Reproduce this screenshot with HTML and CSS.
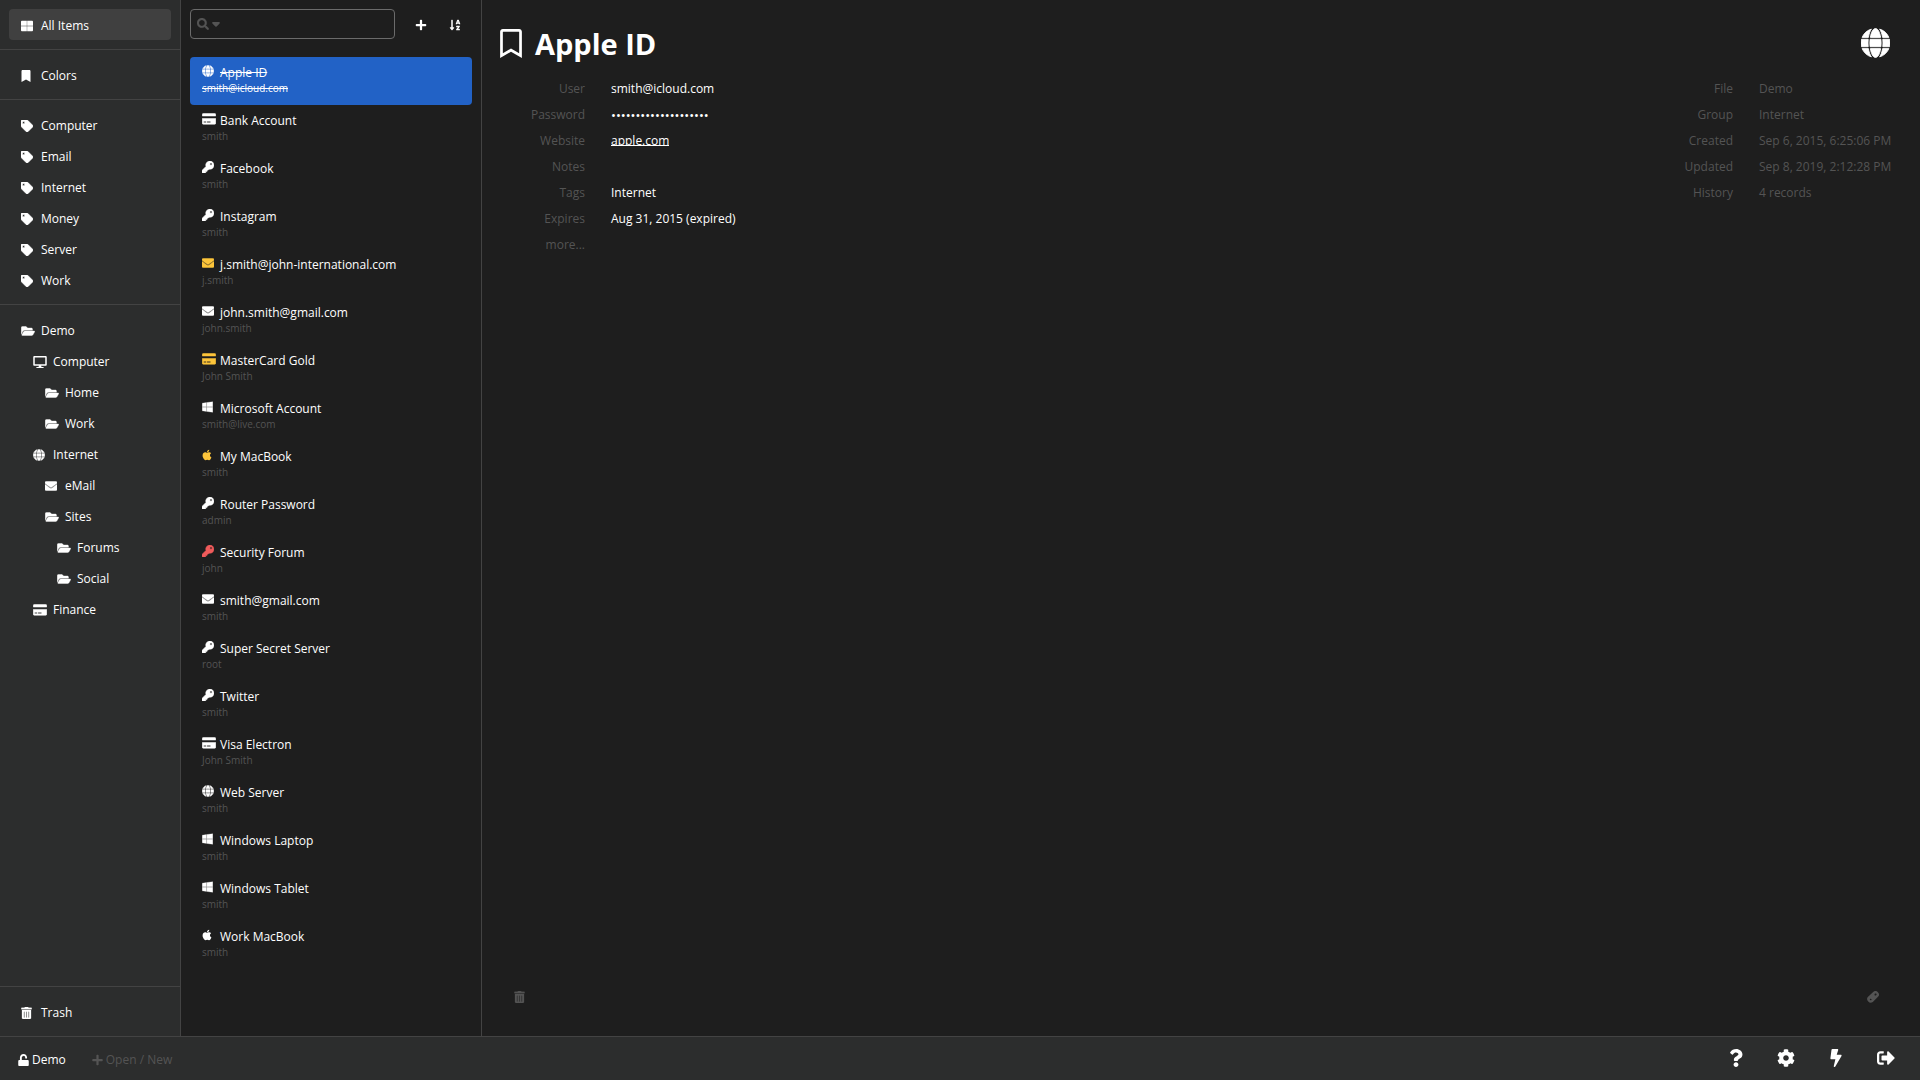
FILE: index.html
```html
<!DOCTYPE html>
<html lang="en">
<head>
<meta charset="utf-8">
<title>Passwords</title>
<link rel="stylesheet" href="styles.css">
</head>
<body>
<svg class="defs" aria-hidden="true">
  <symbol id="i-th" viewBox="0 0 14 14"><path d="M1 1h5.800v5.800H0V2a1 1 0 0 1 1-1zM7.200 1H13a1 1 0 0 1 1 1v4.800H7.200zM0 7.200h6.800V13H1a1 1 0 0 1-1-1zM7.200 7.200H14V12a1 1 0 0 1-1 1H7.200z"/></symbol>
  <symbol id="i-bookmark" viewBox="0 0 384 512"><path d="M0 512V48C0 21.500 21.500 0 48 0h288c26.500 0 48 21.500 48 48v464L192 400z"/></symbol>
  <symbol id="i-bookmark-o" viewBox="0 0 384 512"><path d="M336 0H48C21.500 0 0 21.500 0 48v464l192-112 192 112V48c0-26.500-21.500-48-48-48zm0 428.400l-144-84-144 84V54a6 6 0 0 1 6-6h276a6 6 0 0 1 6 6z"/></symbol>
  <symbol id="i-tag" viewBox="0 0 512 512"><path stroke="currentColor" stroke-width="28" d="M0 252.100V48C0 21.500 21.500 0 48 0h204.100a48 48 0 0 1 33.900 14.100l211.900 211.900c18.700 18.700 18.700 49.100 0 67.900L293.800 497.900c-18.700 18.700-49.100 18.700-67.900 0L14.100 286.100A48 48 0 0 1 0 252.100zM112 64c-26.500 0-48 21.500-48 48s21.500 48 48 48 48-21.500 48-48-21.500-48-48-48z"/></symbol>
  <symbol id="i-folder" viewBox="0 0 576 512"><path stroke="currentColor" stroke-width="16" d="M572.700 292.100L500.300 416.200A64 64 0 0 1 445 448H45c-18.500 0-30-20.100-20.700-36.100l72.400-124.100A64 64 0 0 1 152 256h400c18.500 0 30 20.100 20.700 36.100zM152 224h328v-48c0-26.500-21.500-48-48-48H272l-64-64H48C21.500 64 0 85.500 0 112v278l69.100-118.400C86.200 242.200 118 224 152 224z"/></symbol>
  <symbol id="i-desktop" viewBox="0 0 576 512"><path d="M528 0H48C21.500 0 0 21.500 0 48v320c0 26.500 21.500 48 48 48h192l-16 48h-72c-13.300 0-24 10.700-24 24s10.700 24 24 24h272c13.300 0 24-10.700 24-24s-10.700-24-24-24h-72l-16-48h192c26.500 0 48-21.500 48-48V48c0-26.500-21.500-48-48-48zm-16 352H64V64h448z"/></symbol>
  <symbol id="i-globe" viewBox="0 0 496 512"><path stroke="currentColor" stroke-width="15" d="M336.500 160C322 70.700 287.800 8 248 8s-74 62.700-88.500 152zM152 256c0 22.200 1.200 43.500 3.300 64h185.300c2.100-20.500 3.300-41.800 3.300-64s-1.200-43.500-3.300-64H155.300c-2.100 20.500-3.300 41.800-3.300 64zm324.700-96c-28.600-67.900-86.500-120.400-158-141.600 24.400 33.800 41.200 84.700 50 141.600zM177.200 18.400C105.800 39.600 47.800 92.100 19.300 160h108c8.700-56.900 25.500-107.800 49.900-141.600zM487.400 192H372.700c2.100 21 3.300 42.500 3.300 64s-1.200 43-3.300 64h114.600c5.500-20.500 8.600-41.800 8.600-64s-3.100-43.500-8.500-64zM120 256c0-21.500 1.200-43 3.300-64H8.600C3.200 212.500 0 233.800 0 256s3.200 43.500 8.600 64h114.600c-2-21-3.200-42.500-3.200-64zm39.500 96c14.500 89.300 48.700 152 88.500 152s74-62.700 88.500-152zm159.300 141.600c71.400-21.200 129.400-73.700 158-141.600h-108c-8.800 56.900-25.600 107.800-50 141.600zM19.300 352c28.600 67.900 86.500 120.400 158 141.600-24.400-33.800-41.200-84.700-50-141.600z"/></symbol>
  <symbol id="i-mail" viewBox="0 0 512 512"><path stroke="currentColor" stroke-width="20" d="M502.300 190.800c3.900-3.100 9.700-.2 9.700 4.700V400c0 26.500-21.500 48-48 48H48c-26.500 0-48-21.500-48-48V195.600c0-5 5.700-7.800 9.700-4.700 22.400 17.400 52.100 39.500 154.100 113.600 21.100 15.400 56.700 47.800 92.200 47.600 35.700.3 72-32.800 92.300-47.600 102-74.100 131.600-96.300 154-113.700zM256 320c23.200.4 56.600-29.200 73.400-41.400 132.700-96.300 142.800-104.700 173.400-128.700 5.800-4.500 9.200-11.500 9.200-18.900v-19c0-26.500-21.500-48-48-48H48C21.500 64 0 85.500 0 112v19c0 7.400 3.400 14.300 9.200 18.900 30.600 23.900 40.700 32.400 173.400 128.700 16.800 12.200 50.200 41.800 73.400 41.400z"/></symbol>
  <symbol id="i-card" viewBox="0 0 576 512"><path stroke="currentColor" stroke-width="22" d="M0 432c0 26.500 21.500 48 48 48h480c26.500 0 48-21.500 48-48V236H0zm192-68c0-6.600 5.400-12 12-12h136c6.600 0 12 5.400 12 12v40c0 6.600-5.400 12-12 12H204c-6.600 0-12-5.400-12-12zm-128 0c0-6.600 5.400-12 12-12h72c6.600 0 12 5.400 12 12v40c0 6.600-5.400 12-12 12H76c-6.600 0-12-5.400-12-12zM576 60v68H0V60c0-26.500 21.500-38 48-38h480c26.500 0 48 11.500 48 38z"/></symbol>
  <symbol id="i-key" viewBox="0 0 512 512"><path stroke="currentColor" stroke-width="22" d="M512 176c0 97.200-78.800 176-176 176-11.200 0-22.200-1.100-32.800-3.100l-24 27a24 24 0 0 1-17.900 8.100H224v40c0 13.300-10.700 24-24 24h-40v40c0 13.300-10.700 24-24 24H24c-13.300 0-24-10.700-24-24v-78.100c0-6.400 2.500-12.500 7-17l161.800-161.800A176 176 0 1 1 512 176zM336 128c0 26.500 21.500 48 48 48s48-21.500 48-48-21.500-48-48-48-48 21.500-48 48z"/></symbol>
  <symbol id="i-windows" viewBox="0 0 448 512"><path stroke="currentColor" stroke-width="12" d="M0 93.700l183.600-25.300v177.400H0zm0 324.600l183.600 25.300V268.400H0zm203.800 28L448 480V268.400H203.800zm0-380.600v180.100H448V32z"/></symbol>
  <symbol id="i-apple" viewBox="0 0 384 512"><path d="M318.700 268.700c-.2-36.700 16.400-64.400 50-84.800-18.800-26.900-47.200-41.700-84.700-44.600-35.500-2.800-74.300 20.700-88.500 20.700-15 0-49.400-19.700-76.400-19.700C63.300 141.200 4 184.800 4 273.500q0 39.300 14.400 81.200c12.800 36.700 59 126.700 107.200 125.200 25.200-.6 43-17.900 75.800-17.900 31.800 0 48.300 17.900 76.400 17.900 48.600-.7 90.400-82.500 102.600-119.300-65.200-30.700-61.700-90-61.700-91.900zM262.100 104.500c27.300-32.400 24.800-61.900 24-72.500-24.100 1.400-52 16.400-67.900 34.900-17.500 19.800-27.800 44.300-25.600 71.900 26.100 2 49.900-11.400 69.500-34.300z"/></symbol>
  <symbol id="i-search" viewBox="0 0 512 512"><path stroke="currentColor" stroke-width="12" d="M505 442.700L405.300 343c-4.500-4.500-10.600-7-17-7H372c27.600-35.300 44-79.700 44-128C416 93.100 322.900 0 208 0S0 93.100 0 208s93.100 208 208 208c48.300 0 92.700-16.400 128-44v16.300c0 6.400 2.500 12.500 7 17l99.700 99.700c9.400 9.400 24.600 9.400 33.900 0l28.300-28.300c9.400-9.400 9.400-24.600.1-34zM208 336c-70.700 0-128-57.200-128-128 0-70.700 57.200-128 128-128 70.700 0 128 57.200 128 128 0 70.700-57.200 128-128 128z"/></symbol>
  <symbol id="i-caret" viewBox="0 0 8 12"><path d="M1 4h6c.8 0 1.200.9.600 1.400l-3 3a.9.900 0 0 1-1.200 0l-3-3C-.2 4.900.2 4 1 4z"/></symbol>
  <symbol id="i-plus" viewBox="0 0 448 512"><path d="M416 208H272V64c0-17.700-14.300-32-32-32h-32c-17.700 0-32 14.300-32 32v144H32c-17.700 0-32 14.300-32 32v32c0 17.700 14.300 32 32 32h144v144c0 17.700 14.300 32 32 32h32c17.700 0 32-14.300 32-32V304h144c17.700 0 32-14.300 32-32v-32c0-17.700-14.300-32-32-32z"/></symbol>
  <symbol id="i-sort" viewBox="0 0 448 512"><path d="M176 352h-48V48a16 16 0 0 0-16-16H80a16 16 0 0 0-16 16v304H16c-14.200 0-21.400 17.200-11.300 27.300l80 96a16 16 0 0 0 22.600 0l80-96C197.400 369.300 190.200 352 176 352zm240-64H288a16 16 0 0 0-16 16v32a16 16 0 0 0 16 16h56l-61.300 70.500A32 32 0 0 0 272 446.400V464a16 16 0 0 0 16 16h128a16 16 0 0 0 16-16v-32a16 16 0 0 0-16-16h-56l61.300-70.500A32 32 0 0 0 432 321.600V304a16 16 0 0 0-16-16zm31-85.400l-59.300-160A16 16 0 0 0 372.700 32h-41.400a16 16 0 0 0-15.100 10.600l-59.300 160A16 16 0 0 0 272 224h24.800a16 16 0 0 0 15.200-11.100l4.400-12.900h71l4.400 12.900A16 16 0 0 0 407.200 224H432a16 16 0 0 0 15-21.400zM335.600 144L352 96l16.400 48z"/></symbol>
  <symbol id="i-trash" viewBox="0 0 448 512"><path stroke="currentColor" stroke-width="12" fill-rule="evenodd" d="M432 32H312l-9.400-18.700A24 24 0 0 0 281.100 0H166.800a23.700 23.700 0 0 0-21.400 13.300L136 32H16A16 16 0 0 0 0 48v32a16 16 0 0 0 16 16h416a16 16 0 0 0 16-16V48a16 16 0 0 0-16-16zM32 128h384v336a48 48 0 0 1-48 48H80a48 48 0 0 1-48-48zm80 80v224a16 16 0 0 0 32 0V208a16 16 0 0 0-32 0zm96 0v224a16 16 0 0 0 32 0V208a16 16 0 0 0-32 0zm96 0v224a16 16 0 0 0 32 0V208a16 16 0 0 0-32 0z"/></symbol>
  <symbol id="i-unlock" viewBox="0 0 448 512"><path d="M400 256H152V152.900c0-39.600 31.700-72.500 71.300-72.900 40-.4 72.700 32.100 72.700 72v16c0 13.300 10.700 24 24 24h32c13.300 0 24-10.700 24-24v-16C376 68 307.500-.3 223.500 0 139.500.3 72 69.500 72 153.500V256H48c-26.500 0-48 21.500-48 48v160c0 26.500 21.500 48 48 48h352c26.500 0 48-21.500 48-48V304c0-26.500-21.500-48-48-48z"/></symbol>
  <symbol id="i-question" viewBox="0 0 384 512"><path d="M202 0C122.500 0 69.700 32.500 28.300 90.500c-7.500 10.500-5.300 25.100 5 32.900l43.100 32.700c10.400 7.900 25.100 6 33.300-4.100 25-31 43.600-48.900 82.700-48.900 30.800 0 68.800 19.800 68.800 49.600 0 22.500-18.600 34.100-49 51.100-35.400 19.900-82.300 44.600-82.300 106.500V320c0 13.300 10.700 24 24 24h72.500c13.300 0 24-10.700 24-24v-5.800c0-42.900 125.300-44.600 125.300-160.600C375.700 66.300 285.100 0 202 0zM192 373.500c-38.200 0-69.300 31.100-69.300 69.300S153.800 512 192 512s69.300-31.100 69.300-69.300-31.100-69.200-69.300-69.200z"/></symbol>
  <symbol id="i-cog" viewBox="0 0 512 512"><path d="M487.400 315.700l-42.600-24.600c4.300-23.200 4.300-47 0-70.200l42.600-24.600c4.900-2.800 7.100-8.600 5.500-14-11.100-35.600-30-67.800-54.700-94.600-3.800-4.100-10-5.100-14.800-2.300L380.800 110c-17.900-15.400-38.500-27.300-60.800-35.100V25.800c0-5.600-3.900-10.500-9.400-11.700-36.700-8.200-74.300-7.800-109.200 0-5.500 1.200-9.400 6.100-9.400 11.700V75c-22.200 7.900-42.800 19.800-60.800 35.100L88.700 85.500c-4.900-2.800-11-1.900-14.800 2.300-24.700 26.700-43.600 58.900-54.700 94.600-1.700 5.400.6 11.200 5.500 14L67.300 221c-4.300 23.200-4.300 47 0 70.200l-42.600 24.600c-4.900 2.800-7.100 8.600-5.500 14 11.100 35.600 30 67.800 54.700 94.600 3.800 4.100 10 5.100 14.800 2.300l42.600-24.600c17.900 15.400 38.500 27.300 60.800 35.100v49.200c0 5.600 3.900 10.500 9.400 11.700 36.700 8.200 74.300 7.800 109.200 0 5.500-1.200 9.400-6.100 9.400-11.700v-49.200c22.200-7.900 42.800-19.800 60.800-35.100l42.600 24.600c4.900 2.800 11 1.900 14.800-2.300 24.700-26.700 43.600-58.900 54.700-94.600 1.500-5.500-.7-11.300-5.600-14.100zM256 336c-44.100 0-80-35.900-80-80s35.900-80 80-80 80 35.900 80 80-35.900 80-80 80z"/></symbol>
  <symbol id="i-bolt" viewBox="0 0 320 512"><path d="M296 160H180.600l42.600-129.800C227.200 15 215.700 0 200 0H56C44 0 33.800 8.900 32.200 20.800l-32 240C-1.700 275.200 9.500 288 24 288h118.700L96.600 482.500c-3.600 15.200 8 29.500 23.300 29.500 8.400 0 16.400-4.400 20.800-12l176-304c9.300-15.900-2.200-36-20.700-36z"/></symbol>
  <symbol id="i-exit" viewBox="0 0 512 512"><path d="M497 273L329 441c-15 15-41 4.500-41-17v-96H152c-13.300 0-24-10.700-24-24v-96c0-13.300 10.700-24 24-24h136V88c0-21.400 25.900-32 41-17l168 168c9.300 9.400 9.300 24.600 0 34zM192 436v-40c0-6.600-5.400-12-12-12H96c-17.700 0-32-14.300-32-32V160c0-17.700 14.300-32 32-32h84c6.600 0 12-5.400 12-12V76c0-6.600-5.400-12-12-12H96c-53 0-96 43-96 96v192c0 53 43 96 96 96h84c6.600 0 12-5.400 12-12z"/></symbol>
  <symbol id="i-clip" viewBox="0 0 12 12"><path fill-rule="evenodd" d="M6.200 1A3.400 3.400 0 0 1 11 5.800L5.800 11A3.600 3.600 0 0 1 .800 6zM8.300 2.600a1 1 0 1 0 1.200 1.200A1 1 0 0 0 8.300 2.600zM3.300 7.800a.8.800 0 1 0 1.100 1.100 .8.800 0 0 0-1.100-1.100z"/></symbol>
</svg>
<div class="app">
  <div class="body">
    <nav class="menu">
      <div class="menu-section"><a href="#" class="menu-item active"><svg class="icon w12"><use href="#i-th"/></svg>All Items</a></div>
      <div class="menu-section"><a href="#" class="menu-item"><svg class="icon w10"><use href="#i-bookmark"/></svg>Colors</a></div>
      <div class="menu-section">
        <a href="#" class="menu-item"><svg class="icon w12"><use href="#i-tag"/></svg>Computer</a>
        <a href="#" class="menu-item"><svg class="icon w12"><use href="#i-tag"/></svg>Email</a>
        <a href="#" class="menu-item"><svg class="icon w12"><use href="#i-tag"/></svg>Internet</a>
        <a href="#" class="menu-item"><svg class="icon w12"><use href="#i-tag"/></svg>Money</a>
        <a href="#" class="menu-item"><svg class="icon w12"><use href="#i-tag"/></svg>Server</a>
        <a href="#" class="menu-item"><svg class="icon w12"><use href="#i-tag"/></svg>Work</a>
      </div>
      <div class="menu-section grow">
        <a href="#" class="menu-item"><svg class="icon w14"><use href="#i-folder"/></svg>Demo</a>
        <a href="#" class="menu-item level-1"><svg class="icon w14"><use href="#i-desktop"/></svg>Computer</a>
        <a href="#" class="menu-item level-2"><svg class="icon w14"><use href="#i-folder"/></svg>Home</a>
        <a href="#" class="menu-item level-2"><svg class="icon w14"><use href="#i-folder"/></svg>Work</a>
        <a href="#" class="menu-item level-1"><svg class="icon w12"><use href="#i-globe"/></svg>Internet</a>
        <a href="#" class="menu-item level-2"><svg class="icon w12"><use href="#i-mail"/></svg>eMail</a>
        <a href="#" class="menu-item level-2"><svg class="icon w14"><use href="#i-folder"/></svg>Sites</a>
        <a href="#" class="menu-item level-3"><svg class="icon w14"><use href="#i-folder"/></svg>Forums</a>
        <a href="#" class="menu-item level-3"><svg class="icon w14"><use href="#i-folder"/></svg>Social</a>
        <a href="#" class="menu-item level-1"><svg class="icon w14"><use href="#i-card"/></svg>Finance</a>
      </div>
      <div class="menu-section"><a href="#" class="menu-item"><svg class="icon w11"><use href="#i-trash"/></svg>Trash</a></div>
    </nav>

    <section class="list" aria-label="Items">
      <div class="list-tools">
        <div class="search">
          <svg class="icon w12"><use href="#i-search"/></svg><svg class="icon w8"><use href="#i-caret"/></svg>
          <input type="text" aria-label="Search">
        </div>
        <button type="button" class="tool" aria-label="New"><svg class="icon w12"><use href="#i-plus"/></svg></button>
        <button type="button" class="tool" aria-label="Sort"><svg class="icon w12"><use href="#i-sort"/></svg></button>
      </div>
      <div class="items">
        <a href="#" class="item active expired"><span class="name"><svg class="icon w12"><use href="#i-globe"/></svg><span>Apple ID</span></span><span class="sub">smith@icloud.com</span></a>
        <a href="#" class="item"><span class="name"><svg class="icon w14"><use href="#i-card"/></svg><span>Bank Account</span></span><span class="sub">smith</span></a>
        <a href="#" class="item"><span class="name"><svg class="icon w12"><use href="#i-key"/></svg><span>Facebook</span></span><span class="sub">smith</span></a>
        <a href="#" class="item"><span class="name"><svg class="icon w12"><use href="#i-key"/></svg><span>Instagram</span></span><span class="sub">smith</span></a>
        <a href="#" class="item"><span class="name"><svg class="icon w12 yellow"><use href="#i-mail"/></svg><span>j.smith@john-international.com</span></span><span class="sub">j.smith</span></a>
        <a href="#" class="item"><span class="name"><svg class="icon w12"><use href="#i-mail"/></svg><span>john.smith@gmail.com</span></span><span class="sub">john.smith</span></a>
        <a href="#" class="item"><span class="name"><svg class="icon w14 yellow"><use href="#i-card"/></svg><span>MasterCard Gold</span></span><span class="sub">John Smith</span></a>
        <a href="#" class="item"><span class="name"><svg class="icon w11"><use href="#i-windows"/></svg><span>Microsoft Account</span></span><span class="sub">smith@live.com</span></a>
        <a href="#" class="item"><span class="name"><svg class="icon w10 yellow"><use href="#i-apple"/></svg><span>My MacBook</span></span><span class="sub">smith</span></a>
        <a href="#" class="item"><span class="name"><svg class="icon w12"><use href="#i-key"/></svg><span>Router Password</span></span><span class="sub">admin</span></a>
        <a href="#" class="item"><span class="name"><svg class="icon w12 red"><use href="#i-key"/></svg><span>Security Forum</span></span><span class="sub">john</span></a>
        <a href="#" class="item"><span class="name"><svg class="icon w12"><use href="#i-mail"/></svg><span>smith@gmail.com</span></span><span class="sub">smith</span></a>
        <a href="#" class="item"><span class="name"><svg class="icon w12"><use href="#i-key"/></svg><span>Super Secret Server</span></span><span class="sub">root</span></a>
        <a href="#" class="item"><span class="name"><svg class="icon w12"><use href="#i-key"/></svg><span>Twitter</span></span><span class="sub">smith</span></a>
        <a href="#" class="item"><span class="name"><svg class="icon w14"><use href="#i-card"/></svg><span>Visa Electron</span></span><span class="sub">John Smith</span></a>
        <a href="#" class="item"><span class="name"><svg class="icon w12"><use href="#i-globe"/></svg><span>Web Server</span></span><span class="sub">smith</span></a>
        <a href="#" class="item"><span class="name"><svg class="icon w11"><use href="#i-windows"/></svg><span>Windows Laptop</span></span><span class="sub">smith</span></a>
        <a href="#" class="item"><span class="name"><svg class="icon w11"><use href="#i-windows"/></svg><span>Windows Tablet</span></span><span class="sub">smith</span></a>
        <a href="#" class="item"><span class="name"><svg class="icon w10"><use href="#i-apple"/></svg><span>Work MacBook</span></span><span class="sub">smith</span></a>
      </div>
    </section>

    <main class="details">
      <header class="details-head">
        <button type="button" class="plain" aria-label="Color"><svg class="mark"><use href="#i-bookmark-o"/></svg></button>
        <h1>Apple ID</h1>
        <button type="button" class="plain" aria-label="Icon"><svg class="globe"><use href="#i-globe"/></svg></button>
      </header>
      <div class="details-body">
        <dl class="fields">
          <dt>User</dt><dd>smith@icloud.com</dd>
          <dt>Password</dt><dd class="dots">••••••••••••••••••••</dd>
          <dt>Website</dt><dd><a href="#">apple.com</a></dd>
          <dt>Notes</dt><dd></dd>
          <dt>Tags</dt><dd>Internet</dd>
          <dt>Expires</dt><dd>Aug 31, 2015 (expired)</dd>
          <dt>more...</dt><dd></dd>
        </dl>
        <dl class="fields info">
          <dt>File</dt><dd>Demo</dd>
          <dt>Group</dt><dd>Internet</dd>
          <dt>Created</dt><dd>Sep 6, 2015, 6:25:06 PM</dd>
          <dt>Updated</dt><dd>Sep 8, 2019, 2:12:28 PM</dd>
          <dt>History</dt><dd>4 records</dd>
        </dl>
      </div>
      <div class="details-foot">
        <button type="button" class="plain" aria-label="Delete"><svg class="icon w11"><use href="#i-trash"/></svg></button>
        <button type="button" class="plain" aria-label="Attachments"><svg class="icon w12"><use href="#i-clip"/></svg></button>
      </div>
    </main>
  </div>

  <footer class="footer">
    <button type="button" class="plain file"><svg class="icon w11"><use href="#i-unlock"/></svg>Demo</button>
    <button type="button" class="plain file muted"><svg class="icon w11"><use href="#i-plus"/></svg>Open / New</button>
    <span class="spacer"></span>
    <button type="button" class="plain act" aria-label="Help"><svg><use href="#i-question"/></svg></button>
    <button type="button" class="plain act" aria-label="Settings"><svg><use href="#i-cog"/></svg></button>
    <button type="button" class="plain act" aria-label="Generate"><svg><use href="#i-bolt"/></svg></button>
    <button type="button" class="plain act" aria-label="Lock"><svg><use href="#i-exit"/></svg></button>
  </footer>
</div>
</body>
</html>
```
FILE: styles.css
```css
* { box-sizing: border-box; }

body {
  margin: 0;
  background: #1e1e1e;
  color: #fff;
  font: 12px/16px "Open Sans", "Noto Sans", sans-serif;
}

a { color: inherit; text-decoration: none; }
button, input { font: inherit; color: inherit; }
svg { display: block; fill: currentColor; }

.defs { position: absolute; width: 0; height: 0; }

.icon { height: 12px; flex: none; }
.w8 { width: 8px; }
.w10 { width: 10px; }
.w11 { width: 11px; }
.w12 { width: 12px; }
.w14 { width: 14px; }
.yellow { color: #fdc53a; }
.red { color: #f05b5b; }

.plain, .tool {
  border: 0;
  padding: 0;
  background: none;
  display: flex;
  align-items: center;
}

.app { display: flex; flex-direction: column; min-height: 100vh; }
.body { display: flex; flex: 1; }

/* Sidebar */
.menu {
  width: 181px;
  flex: none;
  display: flex;
  flex-direction: column;
  background: #2c2d2d;
  border-right: 1px solid #434343;
}
.menu-section { padding: 9px; }
.menu-section + .menu-section { border-top: 1px solid #434343; }
.grow { flex: 1; }
.menu-item {
  height: 31px;
  padding-top: 2px;
  padding-left: 12px;
  border-radius: 4px;
  display: flex;
  align-items: center;
}
.menu-item.active { background: #404040; }
.menu-item .icon { margin-right: 8px; }
.menu-item .w14 { margin-right: 6px; }
.menu-item .w11 { margin-right: 9px; }
.menu-item .w10 { margin-right: 10px; }
.level-1 { padding-left: 24px; }
.level-2 { padding-left: 36px; }
.level-3 { padding-left: 48px; }

/* Item list */
.list {
  width: 301px;
  flex: none;
  padding: 9px 9px 0;
  border-right: 1px solid #434343;
}
.list-tools { display: flex; align-items: center; height: 30px; }
.search {
  display: flex;
  align-items: center;
  gap: 3px;
  width: 205px;
  height: 30px;
  margin-right: 9px;
  padding: 0 6px;
  border: 1px solid #6b6b6b;
  border-radius: 4px;
  color: #545454;
}
.search input {
  flex: 1;
  min-width: 0;
  border: 0;
  padding: 0;
  background: none;
  outline: 0;
  color: #fff;
}
.tool { width: 34px; height: 30px; padding-top: 2px; justify-content: center; }
.items { margin-top: 18px; }
.item {
  display: block;
  height: 48px;
  padding: 8px 12px;
  border-radius: 4px;
}
.item.active { background: #2262c6; }
.name { display: flex; line-height: 16px; }
.name .icon { margin-right: 6px; }
.name .w14 { margin-right: 4px; }
.name .w11 { margin-right: 7px; }
.name .w10 { margin-right: 8px; }
.sub {
  display: block;
  font-size: 10px;
  line-height: 14px;
  color: #545454;
}
.active .sub { color: #fff; }
.expired .name span, .expired .sub { text-decoration: line-through; }

/* Details */
.details {
  flex: 1;
  display: flex;
  flex-direction: column;
  padding: 24px 30px 33px 18px;
}
.details-head { display: flex; align-items: center; gap: 13px; height: 38px; }
.details-head h1 {
  flex: 1;
  margin: 0;
  font-size: 29px;
  line-height: 40px;
  padding-top: 2px;
  font-weight: 700;
}
.mark { width: 22px; height: 29px; }
.globe { width: 29px; height: 30px; }
.details-body { display: flex; justify-content: space-between; padding: 14px 0 0 12px; }
.fields {
  margin: 0;
  display: grid;
  grid-template-columns: 73px auto;
  grid-auto-rows: 26px;
  column-gap: 26px;
  line-height: 26px;
}
.fields dt { text-align: right; color: #545454; }
.fields dd { margin: 0; }
.fields a {
  display: block;
  width: max-content;
  height: 18px;
  overflow: hidden;
  text-decoration: underline;
  text-decoration-skip-ink: none;
  text-underline-offset: 0;
}
.fields .dots { font-size: 13px; }
.info { grid-template-columns: 73px 131px; color: #545454; white-space: nowrap; }
.details-foot {
  flex: 1;
  display: flex;
  justify-content: space-between;
  align-items: flex-end;
  padding: 0 11px 0 14px;
  color: #545454;
}

/* Footer */
.footer {
  display: flex;
  align-items: center;
  height: 44px;
  padding: 0 24px 0 18px;
  background: #2c2d2d;
  border-top: 1px solid #434343;
}
.file { gap: 3px; margin-right: 26px; padding-top: 2px; }
.muted { color: #545454; }
.spacer { flex: 1; }
.act { width: 20px; height: 20px; padding-bottom: 2px; margin-left: 30px; justify-content: center; }
.act svg { width: 18px; height: 18px; }
```
